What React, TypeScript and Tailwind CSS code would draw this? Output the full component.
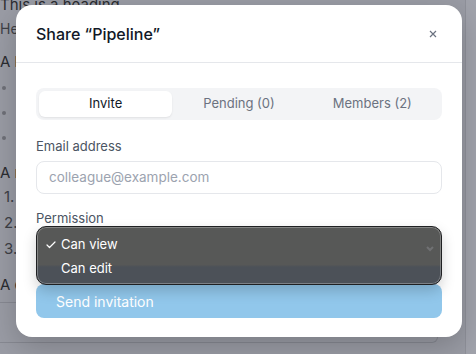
import { Check } from "lucide-react";

const font = { fontFamily: "Inter, 'Noto Sans', sans-serif" };

const BackgroundPage = () => (
  <div className="flex flex-col text-[#2b2d31] text-[15px] leading-[14px]">
    <div className="h-[12px] -mt-[2px] text-[15px]">This is a heading</div>
    <div className="mt-[12px] h-[14px] text-[14px] text-[#3e4046]">Here is some text</div>
    <div className="mt-[19px] h-[14px]">A list</div>
    <div className="flex flex-col gap-[21px] mt-[17px] pl-[2px]">
      <span className="h-[4px] w-[4px] rounded-full bg-[#6e7078]" />
      <span className="h-[4px] w-[4px] rounded-full bg-[#6e7078]" />
      <span className="h-[4px] w-[4px] rounded-full bg-[#6e7078]" />
    </div>
    <div className="mt-[26px] h-[14px]">A numbered list</div>
    <div className="flex flex-col gap-[12px] mt-[10px] pl-[4px] text-[#3e4046]">
      <span className="h-[14px]">1.</span>
      <span className="h-[14px]">2.</span>
      <span className="h-[14px]">3.</span>
    </div>
    <div className="mt-[22px] h-[14px]">A code block</div>
    <div className="mt-[10px] h-[41px] w-[438px] border-y border-r border-[#878992] rounded-r-md flex items-center pl-[28px] pb-[6px] text-[14px]">
      pipeline
    </div>
  </div>
);

const Tabs = () => (
  <div className="flex p-[3px] rounded-lg bg-[#f3f4f6] h-[32px]">
    <div className="flex-1 flex items-center justify-center rounded-md bg-white shadow-[0_1px_2px_rgba(0,0,0,0.08)] text-[13px] text-[#111827]">
      Invite
    </div>
    <div className="flex-1 flex items-center justify-center text-[13px] text-[#6b7280]">Pending (0)</div>
    <div className="flex-1 flex items-center justify-center text-[13px] text-[#6b7280]">Members (2)</div>
  </div>
);

const PermissionSelect = () => (
  <div className="relative">
    <div className="h-[33px] mt-[6px] rounded-lg border border-[#e5e7eb] bg-white" />
    <div className="absolute left-0 right-0 -top-[1px] h-[59px] rounded-[10px] border border-[#1f2022] bg-[linear-gradient(to_bottom,#575857_0%,#575857_66%,#4c5158_70%,#4c5158_100%)] shadow-[inset_0_0_0_1px_rgba(255,255,255,0.28),0_6px_14px_rgba(0,0,0,0.18)] flex flex-col pt-[6px] text-white text-[13px]">
      <div className="h-[24px] flex items-center">
        <Check className="ml-[8px] w-[12px] h-[12px]" strokeWidth={2.4} />
        <span className="ml-[4px]">Can view</span>
      </div>
      <div className="h-[24px] flex items-center pl-[24px]">Can edit</div>
      <svg className="absolute right-[6px] top-[18px]" width="10" height="8" viewBox="0 0 10 8">
        <path d="M2 2l3 3 3-3" fill="none" stroke="#707173" strokeWidth="2" />
      </svg>
    </div>
  </div>
);

export default function App() {
  return (
    <div className="relative w-[476px] h-[354px] overflow-hidden bg-[#9a9ca5]" style={font}>
      <BackgroundPage />
      <div className="absolute top-0 right-0 w-[11px] h-full bg-[#a1a3ac] border-l border-[#8f919a]" />

      <div className="absolute left-[16px] top-[5px] w-[446px] h-[332px] rounded-2xl bg-white shadow-[0_10px_30px_rgba(0,0,0,0.2)] flex flex-col">
        <div className="h-[58px] px-5 flex items-center justify-between border-b border-[#e5e7eb]">
          <h2 className="text-[16px] font-medium text-[#111827]">Share “Pipeline”</h2>
          <svg width="8" height="8" viewBox="0 0 8 8" className="mr-[5px]">
            <path d="M1 1l6 6M7 1l-6 6" stroke="#6b7280" strokeWidth="1.2" />
          </svg>
        </div>

        <div className="flex flex-col px-5 pt-[25px]">
          <Tabs />
          <label className="mt-[17px] text-[13px] leading-[18px] text-[#4b5563]">Email address</label>
          <div className="mt-[6px] h-[33px] rounded-lg border border-[#e5e7eb] flex items-center px-3 text-[13.5px] text-[#9ca3af]">
            colleague@example.com
          </div>
          <label className="mt-[15px] text-[13px] leading-[18px] text-[#4b5563]">Permission</label>
          <PermissionSelect />
          <button className="mt-[18px] h-[34px] rounded-lg bg-[#91c7eb] text-white text-[14px] text-left pl-5">
            Send invitation
          </button>
        </div>
      </div>
    </div>
  );
}
